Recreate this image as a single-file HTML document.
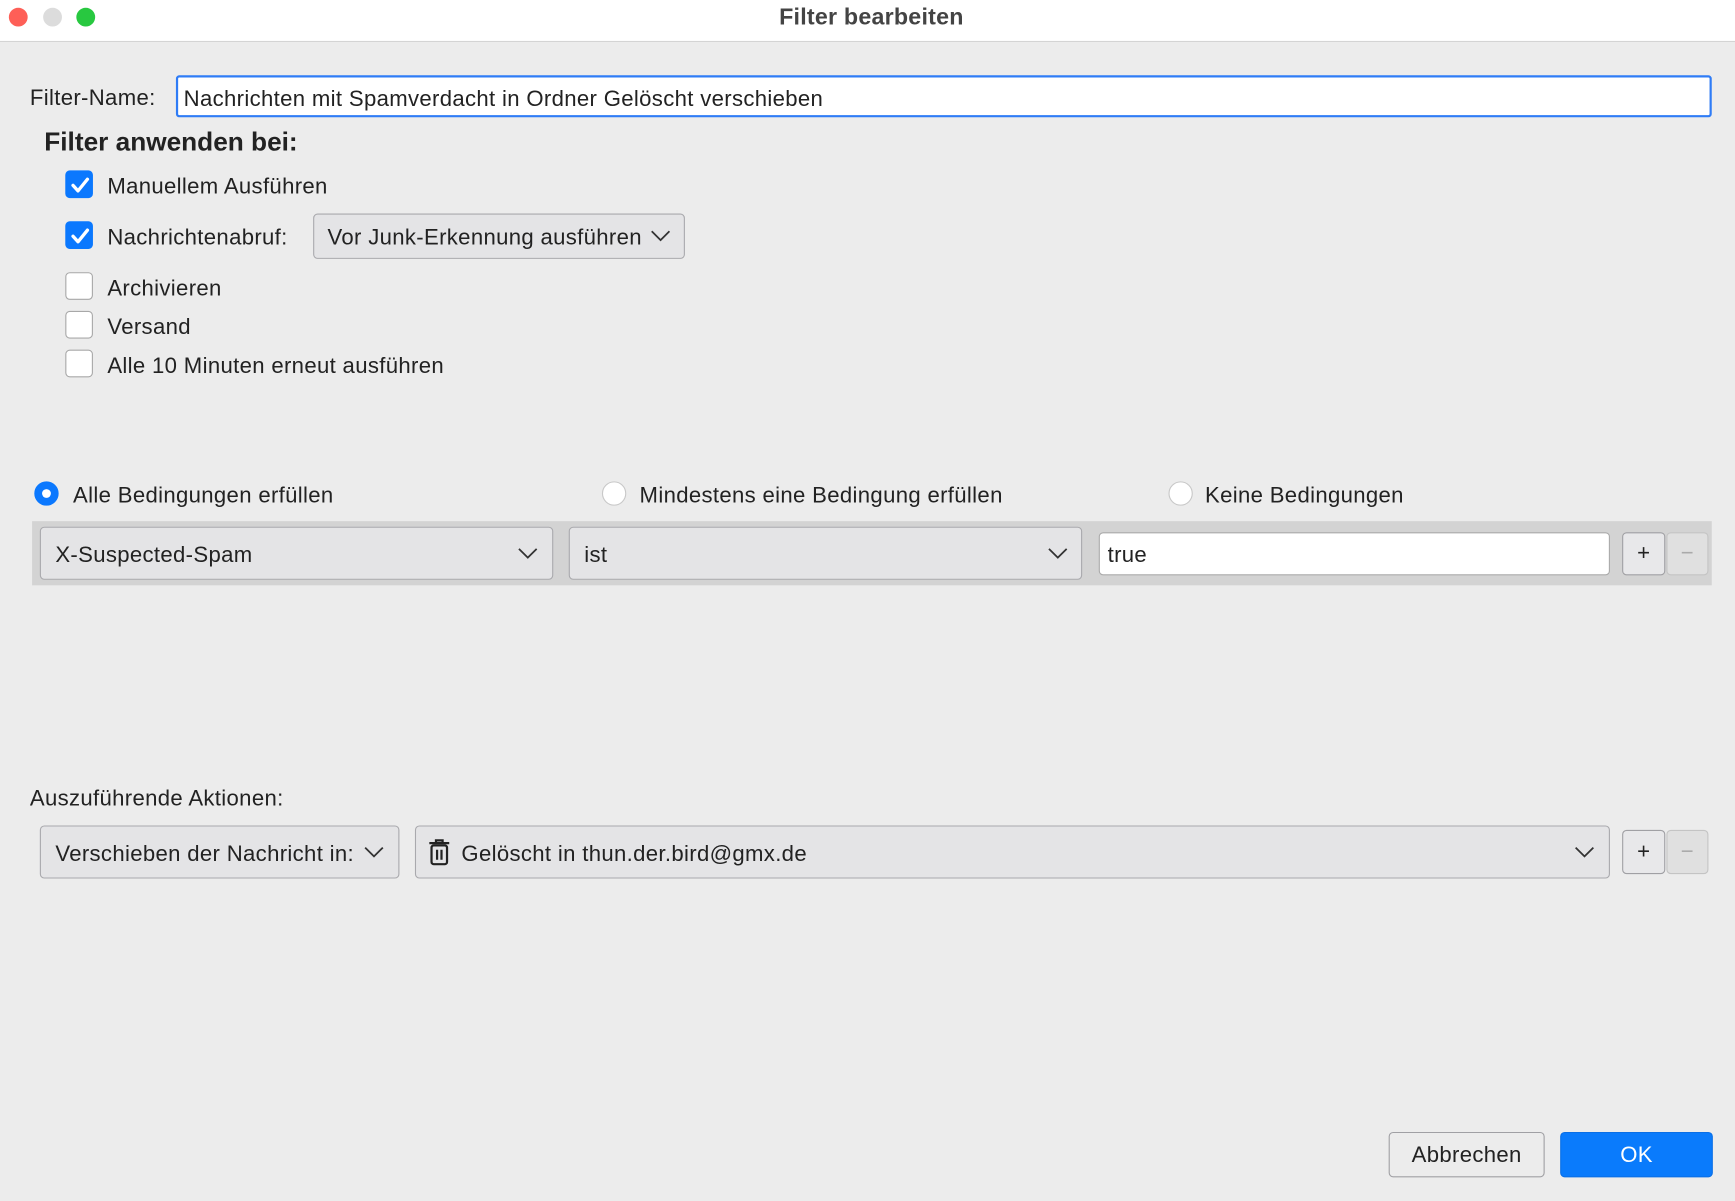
<!DOCTYPE html>
<html><head><meta charset="utf-8"><style>
html,body{margin:0;padding:0;width:1735px;height:1200px;overflow:hidden;background:#ececec;}
#w{position:absolute;left:0;top:0;width:1568px;height:1085px;transform:scale(1.1065);transform-origin:0 0;font-family:"Liberation Sans",sans-serif;font-size:20px;letter-spacing:0.3px;color:#222;}
.a{position:absolute;}
.t{position:absolute;line-height:24px;white-space:nowrap;margin-top:1.5px;}
.cb{position:absolute;left:59px;width:25px;height:25px;border:1px solid #a8a8a8;border-radius:4px;background:#fff;box-sizing:border-box;}
.cb.on{background:#0b78fe;border-color:#0b78fe;}
.sel{position:absolute;background:#e4e4e6;border:1px solid #a9a9ad;border-radius:4px;box-sizing:border-box;}
.btn{position:absolute;background:#e8e8ea;border:1px solid #a0a0a4;border-radius:4px;box-sizing:border-box;text-align:center;}
.rd{position:absolute;width:22px;height:22px;border-radius:50%;background:#fff;border:1px solid #c8c8c8;box-sizing:border-box;}
</style></head><body><div id="w">
<div class="a" style="left:0;top:0;width:1568px;height:37px;background:#fff;border-bottom:1px solid #d4d4d4;"></div>
<div class="a" style="left:8px;top:7px;width:17px;height:17px;border-radius:50%;background:#fe5f57;"></div>
<div class="a" style="left:39px;top:7px;width:17px;height:17px;border-radius:50%;background:#dcdcdc;"></div>
<div class="a" style="left:69px;top:7px;width:17px;height:17px;border-radius:50%;background:#28c840;"></div>
<div class="t" style="left:0;width:1575px;text-align:center;top:2px;font-weight:bold;color:#444;font-size:21px;letter-spacing:0.2px;">Filter bearbeiten</div>

<div class="t" style="left:27px;top:75px;">Filter-Name:</div>
<div class="a" style="left:159px;top:68px;width:1388px;height:38px;border:2px solid #2f7cf6;border-radius:3px;background:#fff;box-sizing:border-box;"></div>
<div class="t" style="left:166px;top:76px;">Nachrichten mit Spamverdacht in Ordner Gelöscht verschieben</div>

<div class="t" style="left:40px;top:115px;font-size:23.7px;font-weight:bold;letter-spacing:0;">Filter anwenden bei:</div>

<div class="cb on" style="top:154px;"><svg width="25" height="25"><path d="M6 12.5l4.5 5L19 7" stroke="#fff" stroke-width="3" fill="none" stroke-linecap="round" stroke-linejoin="round"/></svg></div>
<div class="t" style="left:97px;top:155px;">Manuellem Ausführen</div>
<div class="cb on" style="top:200px;"><svg width="25" height="25"><path d="M6 12.5l4.5 5L19 7" stroke="#fff" stroke-width="3" fill="none" stroke-linecap="round" stroke-linejoin="round"/></svg></div>
<div class="t" style="left:97px;top:201px;">Nachrichtenabruf:</div>
<div class="sel" style="left:283px;top:193px;width:336px;height:41px;"></div>
<div class="t" style="left:296px;top:201px;">Vor Junk-Erkennung ausführen</div>
<svg class="a" style="left:587px;top:206px;" width="20" height="14"><path d="M2 3l8 8 8-8" stroke="#333" stroke-width="1.6" fill="none"/></svg>
<div class="cb" style="top:246px;"></div>
<div class="t" style="left:97px;top:247px;">Archivieren</div>
<div class="cb" style="top:281px;"></div>
<div class="t" style="left:97px;top:282px;">Versand</div>
<div class="cb" style="top:316px;"></div>
<div class="t" style="left:97px;top:317px;">Alle 10 Minuten erneut ausführen</div>

<div class="rd" style="left:31px;top:435px;background:#0b78fe;border-color:#0b78fe;"><div class="a" style="left:6px;top:6px;width:8px;height:8px;border-radius:50%;background:#fff;"></div></div>
<div class="t" style="left:66px;top:434px;">Alle Bedingungen erfüllen</div>
<div class="rd" style="left:544px;top:435px;"></div>
<div class="t" style="left:578px;top:434px;">Mindestens eine Bedingung erfüllen</div>
<div class="rd" style="left:1056px;top:435px;"></div>
<div class="t" style="left:1089px;top:434px;">Keine Bedingungen</div>

<div class="a" style="left:29px;top:471px;width:1518px;height:58px;background:#d3d3d3;"></div>
<div class="sel" style="left:36px;top:476px;width:464px;height:48px;"></div>
<div class="t" style="left:50px;top:488px;">X-Suspected-Spam</div>
<svg class="a" style="left:467px;top:493px;" width="20" height="14"><path d="M2 3l8 8 8-8" stroke="#333" stroke-width="1.6" fill="none"/></svg>
<div class="sel" style="left:514px;top:476px;width:464px;height:48px;"></div>
<div class="t" style="left:528px;top:488px;">ist</div>
<svg class="a" style="left:946px;top:493px;" width="20" height="14"><path d="M2 3l8 8 8-8" stroke="#333" stroke-width="1.6" fill="none"/></svg>
<div class="a" style="left:993px;top:481px;width:462px;height:39px;background:#fff;border:1px solid #aaa;border-radius:4px;box-sizing:border-box;"></div>
<div class="t" style="left:1001px;top:488px;">true</div>
<div class="btn" style="left:1466px;top:481px;width:39px;height:39px;line-height:37px;font-size:20px;">+</div>
<div class="btn" style="left:1506px;top:481px;width:38px;height:39px;line-height:37px;color:#aaa;border-color:#c4c4c4;background:#e0e0e0;">−</div>

<div class="t" style="left:27px;top:708px;">Auszuführende Aktionen:</div>
<div class="sel" style="left:36px;top:746px;width:325px;height:48px;"></div>
<div class="t" style="left:50px;top:758px;">Verschieben der Nachricht in:</div>
<svg class="a" style="left:328px;top:763px;" width="20" height="14"><path d="M2 3l8 8 8-8" stroke="#333" stroke-width="1.6" fill="none"/></svg>
<div class="sel" style="left:375px;top:746px;width:1080px;height:48px;"></div>
<svg class="a" style="left:386px;top:757px;" width="22" height="26"><path d="M2 5h18M8 5V2.5h6V5" stroke="#222" stroke-width="2" fill="none"/><rect x="4" y="7" width="14" height="17" rx="2" stroke="#222" stroke-width="2" fill="none"/><path d="M9 11v9M13 11v9" stroke="#222" stroke-width="2"/></svg>
<div class="t" style="left:417px;top:758px;">Gelöscht in thun.der.bird@gmx.de</div>
<svg class="a" style="left:1422px;top:763px;" width="20" height="14"><path d="M2 3l8 8 8-8" stroke="#333" stroke-width="1.6" fill="none"/></svg>
<div class="btn" style="left:1466px;top:750px;width:39px;height:40px;line-height:38px;font-size:20px;">+</div>
<div class="btn" style="left:1506px;top:750px;width:38px;height:40px;line-height:38px;color:#aaa;border-color:#c4c4c4;background:#e0e0e0;">−</div>

<div class="btn" style="left:1255px;top:1023px;width:141px;height:41px;line-height:40px;background:#ececec;">Abbrechen</div>
<div class="btn" style="left:1410px;top:1023px;width:138px;height:41px;line-height:40px;background:#0a7bfc;border-color:#0a6fe6;color:#fff;">OK</div>
</div></body></html>
